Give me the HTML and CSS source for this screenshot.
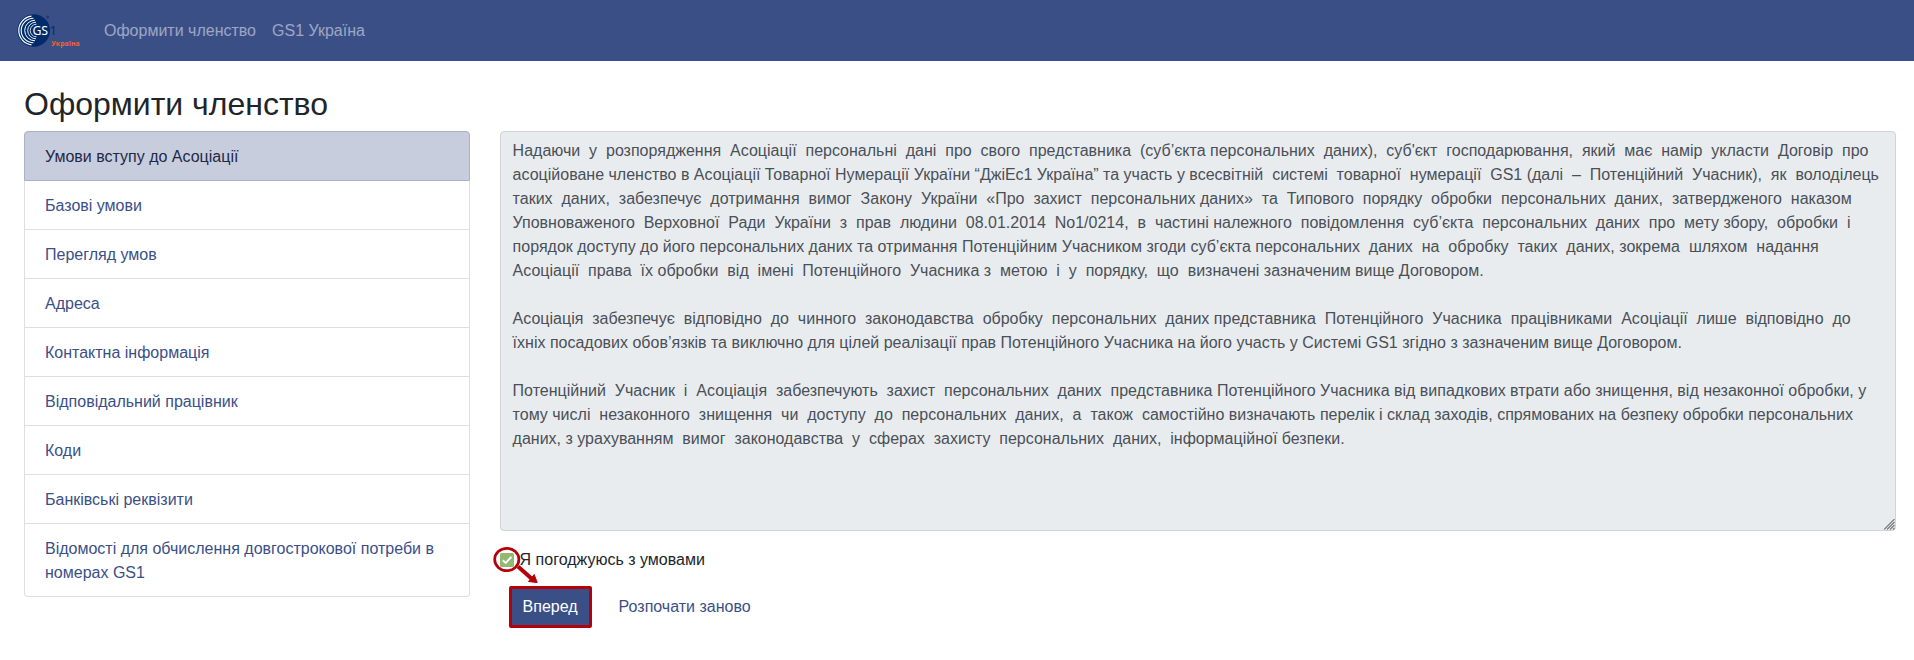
FILE: index.html
```html
<!DOCTYPE html>
<html lang="uk">
<head>
<meta charset="utf-8">
<title>Оформити членство</title>
<link rel="stylesheet" href="styles.css">
</head>
<body>
<nav class="navbar">
  <a class="brand" href="#">
    <svg class="logo" width="66" height="40" viewBox="0 0 66 40">
      <circle cx="17.700" cy="19.500" r="16.300" fill="#002c6c"/>
      <g fill="none" stroke="#fff">
        <path d="M15.500 5.200A14.400 14.400 0 0 0 15.500 33.800" stroke-width="1.200"/>
        <path d="M17.500 7.200A12.300 12.300 0 0 0 17.500 31.800" stroke-width="1.100"/>
        <path d="M19 9.200A10.300 10.300 0 0 0 19 29.800" stroke-width="1"/>
        <path d="M20 11.200A8.300 8.300 0 0 0 20 27.800" stroke-width=".9"/>
        <path d="M20.500 13.200A6.300 6.300 0 0 0 20.500 25.800" stroke-width=".8"/>
      </g>
      <circle cx="31.700" cy="6" r="1.500" fill="#1c3a78"/>
      <path d="M17.500 14.500H30V25H17.500Z" fill="#002c6c"/>
      <text class="logo-gs" x="16.500" y="23.900" textLength="15.500">GS</text>
      <text class="logo-one" x="33.800" y="23.900">1</text>
      <text class="logo-ua" x="35.200" y="35.300" textLength="28.500">Україна</text>
    </svg>
  </a>
  <a class="nav-link" href="#">Оформити членство</a>
  <a class="nav-link" href="#">GS1 Україна</a>
</nav>
<main class="page">
  <h2 class="title">Оформити членство</h2>
  <div class="columns">
    <div class="steps">
      <a class="step active" href="#">Умови вступу до Асоціації</a>
      <a class="step" href="#">Базові умови</a>
      <a class="step" href="#">Перегляд умов</a>
      <a class="step" href="#">Адреса</a>
      <a class="step" href="#">Контактна інформація</a>
      <a class="step" href="#">Відповідальний працівник</a>
      <a class="step" href="#">Коди</a>
      <a class="step" href="#">Банківські реквізити</a>
      <a class="step" href="#">Відомості для обчислення довгострокової потреби в номерах GS1</a>
    </div>
    <section class="content">
      <div class="terms">Надаючи  у  розпорядження  Асоціації  персональні  дані  про  свого  представника  (суб’єкта персональних  даних),  суб'єкт  господарювання,  який  має  намір  укласти  Договір  про
асоційоване членство в Асоціації Товарної Нумерації України “ДжіЕс1 Україна” та участь у всесвітній  системі  товарної  нумерації  GS1 (далі  –  Потенційний  Учасник),  як  володілець
таких  даних,  забезпечує  дотримання  вимог  Закону  України  «Про  захист  персональних даних»  та  Типового  порядку  обробки  персональних  даних,  затвердженого  наказом
Уповноваженого  Верховної  Ради  України  з  прав  людини  08.01.2014  No1/0214,  в  частині належного  повідомлення  суб’єкта  персональних  даних  про  мету збору,  обробки  і
порядок доступу до його персональних даних та отримання Потенційним Учасником згоди суб’єкта персональних  даних  на  обробку  таких  даних, зокрема  шляхом  надання
Асоціації  права  їх обробки  від  імені  Потенційного  Учасника з  метою  і  у  порядку,  що  визначені зазначеним вище Договором.

Асоціація  забезпечує  відповідно  до  чинного  законодавства  обробку  персональних  даних представника  Потенційного  Учасника  працівниками  Асоціації  лише  відповідно  до
їхніх посадових обов’язків та виключно для цілей реалізації прав Потенційного Учасника на його участь у Системі GS1 згідно з зазначеним вище Договором.

Потенційний  Учасник  і  Асоціація  забезпечують  захист  персональних  даних  представника Потенційного Учасника від випадкових втрати або знищення, від незаконної обробки, у
тому числі  незаконного  знищення  чи  доступу  до  персональних  даних,  а  також  самостійно визначають перелік і склад заходів, спрямованих на безпеку обробки персональних
даних, з урахуванням  вимог  законодавства  у  сферах  захисту  персональних  даних,  інформаційної безпеки.<svg class="grip" width="11" height="11" viewBox="0 0 11 11"><path d="M0 10.500L10.500 0M3 10.500L10.500 3M6 10.500L10.500 6M9 10.500L10.500 9" fill="none" stroke="#777" stroke-width="1.100"/></svg></div>
      <div class="agree">
        <svg class="check" width="14" height="14" viewBox="0 0 14 14"><rect width="14" height="14" rx="1.500" fill="#93b874"/><path d="M2.800 7.200L5.700 10L11.400 3.800" fill="none" stroke="#fff" stroke-width="1.900"/></svg>
        <span>Я погоджуюсь з умовами</span>
        <svg class="mark" width="60" height="45" viewBox="0 0 60 45">
          <ellipse cx="16.800" cy="14.500" rx="12.100" ry="11.200" fill="none" stroke="#b50009" stroke-width="2.700"/>
          <path d="M28 21.500L42 34" stroke="#b50009" stroke-width="4"/>
          <path d="M38.500 36.500L44.200 29.500L47.200 37.600Z" fill="#b50009" stroke="#b50009" stroke-linejoin="round"/>
        </svg>
      </div>
      <div class="actions">
        <button class="btn next">Вперед</button>
        <a class="btn" href="#">Розпочати заново</a>
      </div>
    </section>
  </div>
</main>
</body>
</html>
```
FILE: styles.css
```css
* { box-sizing: border-box; }
body {
  margin: 0;
  background: #fff;
  color: #212529;
  font: 16px/24px "Liberation Sans", Arial, sans-serif;
}
a { color: #3b4f87; text-decoration: none; }
.navbar {
  display: flex;
  align-items: center;
  height: 61px;
  padding-left: 16px;
  background: #3b4f87;
}
.brand { display: flex; margin-right: 14px; }
.logo { display: block; }
.logo-gs { font: 12.3px "Noto Sans", sans-serif; fill: #fff; }
.logo-one { font: 12.3px "Noto Sans", sans-serif; fill: #002c6c; }
.logo-ua { font: bold 6.8px "Open Sans", sans-serif; fill: #f26334; }
.nav-link { padding: 8px; color: rgba(255, 255, 255, .5); }
.page { padding: 24px 18px 0 24px; }
.title { margin: 0 0 8px; font-size: 32px; font-weight: 500; line-height: 38.4px; }
.columns {
  display: grid;
  grid-template-columns: 446px 1fr;
  column-gap: 29.6px;
  align-items: start;
}
.steps { display: flex; flex-direction: column; }
.step {
  padding: 13px 20px 11px;
  border: 1px solid #dfdfdf;
  border-top-width: 0;
}
.step:first-child { border-top-width: 1px; border-radius: 4px 4px 0 0; }
.step:last-child { border-radius: 0 0 4px 4px; }
.step.active { background: #c8cddd; border-color: #abb3c3; color: #1f2946; }
.terms {
  position: relative;
  height: 400px;
  padding: 7px 12px 5px;
  border: 1px solid #ced4da;
  border-radius: 4px;
  background: #e9ecef;
  color: #495057;
  white-space: pre-wrap;
}
.grip { position: absolute; right: 0; bottom: 0; }
.agree {
  position: relative;
  display: flex;
  align-items: center;
  gap: 6px;
  margin-top: 17px;
}
.mark { position: absolute; left: -10px; top: -3px; }
.actions { display: flex; align-items: center; gap: 14px; margin: 14px 0 0 9px; }
.btn {
  padding: 8px 13px;
  border: 0;
  font: inherit;
}
.next {
  padding: 6px 11px;
  background: #3b4f87;
  color: #fff;
  border: 3px solid #b50009;
  border-radius: 2px;
}
```
